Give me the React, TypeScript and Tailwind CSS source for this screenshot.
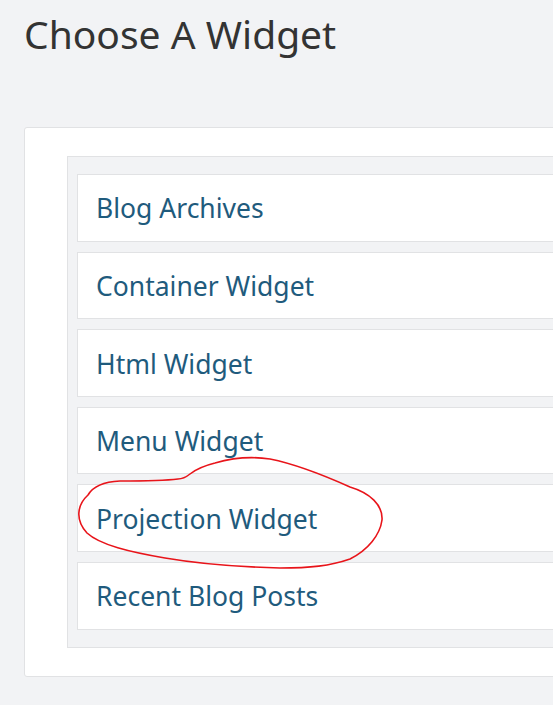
import React from "react";

const widgets = [
    "Blog Archives",
    "Container Widget",
    "Html Widget",
    "Menu Widget",
    "Projection Widget",
    "Recent Blog Posts",
];

const App = () => {
    return (
        <div className="relative min-h-[705px] w-[553px] overflow-hidden bg-[#f2f3f5] font-['Noto_Sans',sans-serif]">
            <h1 className="pl-6 pt-[10px] text-[39px] leading-[48px] text-[#333333]">Choose A Widget</h1>

            <div className="ml-6 mt-[69px] w-[600px] rounded-[3px] border border-[#e1e2e4] bg-white pb-7 pl-[42px] pt-7">
                <div className="flex flex-col gap-[10px] border border-[#e1e2e4] bg-[#f2f3f5] pb-[17px] pl-[9px] pt-[17px]">
                    {widgets.map((name) => (
                        <div
                            key={name}
                            className="flex h-[67.6px] items-center border border-[#e1e2e4] bg-white pl-[18px] pt-[3px] text-[26.5px] text-[#1f5b7d]"
                        >
                            {name}
                        </div>
                    ))}
                </div>
            </div>

            <svg
                className="pointer-events-none absolute left-0 top-0"
                width="553"
                height="705"
                viewBox="0 0 553 705"
                fill="none"
            >
                <path
                    d="M178 479 C170 480 150 481 120 481 C100 482 92 488 88 495 C77 505 75 520 87 533 C100 545 130 552 165 558 C200 564 240 567 280 568 C310 568 330 566 350 559 C368 550 380 535 382 520 C383 505 370 493 350 487 C330 478 300 465 270 459 C250 456 232 458 215 463 C203 466 195 470 190 474 C185 478 182 479 178 479"
                    stroke="#e8141a"
                    strokeWidth="1.6"
                    strokeLinecap="round"
                />
            </svg>
        </div>
    );
};

export default App;
